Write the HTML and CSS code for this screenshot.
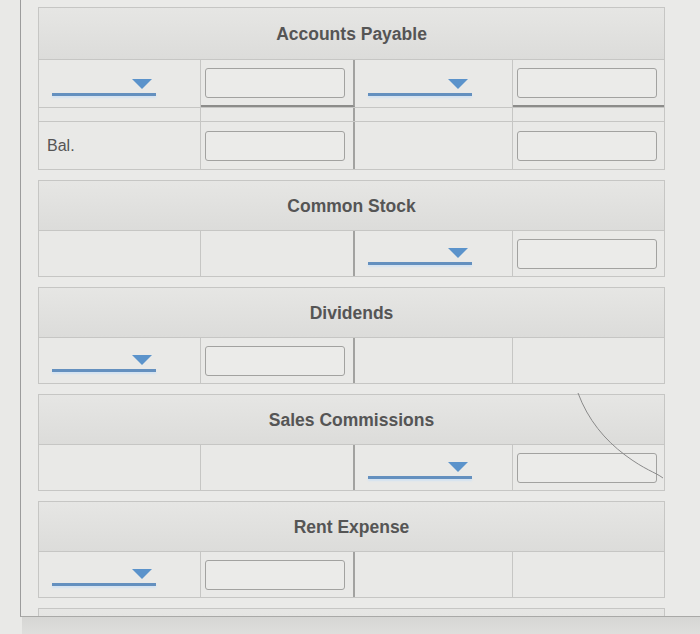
FILE: index.html
```html
<!DOCTYPE html>
<html lang="en">
<head>
<meta charset="utf-8">
<title>T-Accounts</title>
<link rel="stylesheet" href="styles.css">
</head>
<body>
<div class="screen">
  <div class="panel">
    <div class="acct">
      <div class="acct-head head-lg">Accounts Payable</div>
      <div class="acct-row">
        <div class="cell c1 dd-cell"><div class="dd"><span class="tri"></span><span class="line"></span></div></div>
        <div class="cell c2 in-cell total"><span class="input"></span></div>
        <div class="cell c3 dd-cell"><div class="dd"><span class="tri"></span><span class="line"></span></div></div>
        <div class="cell c4 in-cell total"><span class="input"></span></div>
      </div>
      <div class="acct-row spacer">
        <div class="cell c1"></div>
        <div class="cell c2"></div>
        <div class="cell c3"></div>
        <div class="cell c4"></div>
      </div>
      <div class="acct-row">
        <div class="cell c1 label-cell">Bal.</div>
        <div class="cell c2 in-cell"><span class="input"></span></div>
        <div class="cell c3"></div>
        <div class="cell c4 in-cell"><span class="input"></span></div>
      </div>
    </div>

    <div class="acct">
      <div class="acct-head">Common Stock</div>
      <div class="acct-row">
        <div class="cell c1"></div>
        <div class="cell c2"></div>
        <div class="cell c3 dd-cell"><div class="dd"><span class="tri"></span><span class="line"></span></div></div>
        <div class="cell c4 in-cell"><span class="input"></span></div>
      </div>
    </div>

    <div class="acct">
      <div class="acct-head">Dividends</div>
      <div class="acct-row">
        <div class="cell c1 dd-cell"><div class="dd"><span class="tri"></span><span class="line"></span></div></div>
        <div class="cell c2 in-cell"><span class="input"></span></div>
        <div class="cell c3"></div>
        <div class="cell c4"></div>
      </div>
    </div>

    <div class="acct">
      <div class="acct-head">Sales Commissions</div>
      <div class="acct-row">
        <div class="cell c1"></div>
        <div class="cell c2"></div>
        <div class="cell c3 dd-cell"><div class="dd"><span class="tri"></span><span class="line"></span></div></div>
        <div class="cell c4 in-cell"><span class="input"></span></div>
      </div>
    </div>

    <div class="acct">
      <div class="acct-head">Rent Expense</div>
      <div class="acct-row">
        <div class="cell c1 dd-cell"><div class="dd"><span class="tri"></span><span class="line"></span></div></div>
        <div class="cell c2 in-cell"><span class="input"></span></div>
        <div class="cell c3"></div>
        <div class="cell c4"></div>
      </div>
    </div>

    <div class="acct">
      <div class="acct-head"></div>
    </div>
  </div>
  <div class="bottom-bar"></div>
  <svg class="scratch" width="700" height="634" viewBox="0 0 700 634" aria-hidden="true">
    <path d="M578 393 C 588 420, 605 440, 625 455 S 655 472, 663 478" fill="none" stroke="#8a8a8a" stroke-width="1"/>
  </svg>
</div>
</body>
</html>
```

FILE: styles.css
```css
* { box-sizing: border-box; }

html, body {
  margin: 0;
  padding: 0;
  background: #e9e9e7;
  font-family: "Liberation Sans", Arial, sans-serif;
  color: #555;
}

.screen {
  position: relative;
  width: 700px;
  height: 634px;
  overflow: hidden;
}

.panel {
  margin-left: 20px;
  height: 617px;
  border-left: 1px solid #9c9c9c;
  border-bottom: 1px solid #a9a9a7;
  padding: 7px 0 0 17px;
  overflow: hidden;
  background: #eaeae8;
}

.acct {
  width: 627px;
  border: 1px solid #c6c6c4;
  margin-bottom: 10px;
  background: #e9e9e7;
}

.acct-head {
  height: 50px;
  display: flex;
  align-items: center;
  justify-content: center;
  font-size: 17.5px;
  font-weight: bold;
  color: #555;
  background: linear-gradient(#e6e6e4, #dcdcda);
  border-bottom: 1px solid #c6c6c4;
  padding-top: 2px;
}

.acct-head.head-lg {
  height: 52px;
}

.acct-row {
  display: grid;
  grid-template-columns: 162px 154px 158px 1fr;
  height: 45px;
}

.head-lg + .acct-row {
  height: 47px;
}

.acct-row + .acct-row {
  border-top: 1px solid #c6c6c4;
}

.acct-row.spacer {
  height: 14px;
}

.acct-row.spacer + .acct-row {
  height: 48px;
}

.cell {
  display: flex;
  border-right: 1px solid #c6c6c4;
}

.cell.c2 {
  border-right: 2px solid #a2a2a0;
}

.cell.c4 {
  border-right: none;
}

.cell.total {
  border-bottom: 2px solid #8c8c8a;
}

.in-cell {
  align-items: center;
}

.input {
  display: block;
  width: 140px;
  height: 30px;
  margin-left: 4px;
  border: 1.5px solid #a2a2a0;
  border-radius: 3px;
  background: #ebebe9;
}

.dd-cell {
  align-items: flex-end;
  padding-bottom: 11px;
}

.dd {
  display: flex;
  flex-direction: column;
  width: 104px;
  margin-left: 13px;
}

.tri {
  display: block;
  align-self: flex-end;
  margin-right: 4px;
  width: 0;
  height: 0;
  border-left: 10px solid transparent;
  border-right: 10px solid transparent;
  border-top: 10px solid #5b93cb;
}

.line {
  display: block;
  margin-top: 4px;
  height: 3px;
  background: #6490bf;
  box-shadow: 0 2px 2px #d3e3f2;
}

.label-cell {
  align-items: center;
  padding-left: 8px;
  font-size: 16px;
  color: #555;
}

.bottom-bar {
  margin-left: 22px;
  height: 17px;
  background: linear-gradient(#d6d6d4, #dededc);
}

.scratch {
  position: absolute;
  left: 0;
  top: 0;
  pointer-events: none;
}
```
